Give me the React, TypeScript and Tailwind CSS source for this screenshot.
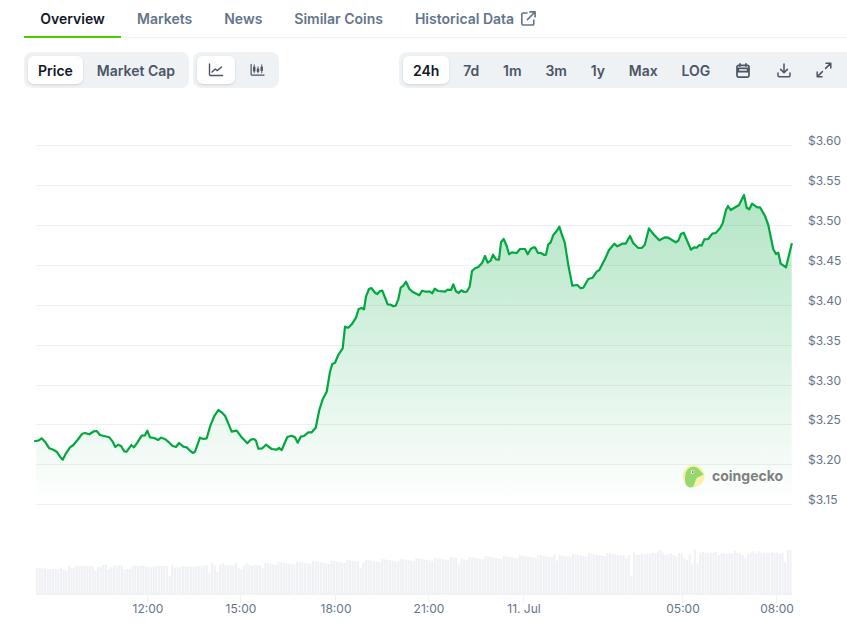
const tabs = ['Overview', 'Markets', 'News', 'Similar Coins']
const ranges = ['7d', '1m', '3m', '1y', 'Max', 'LOG']

// traced from the reference, in three overlapping crops: [x, y] pairs in crop pixels (3x)
const leftCrop = [15,153,25,152,35,145,45,155,58,175,70,179,80,185,90,200,98,209,108,190,120,172,130,165,145,147,157,131,165,129,178,133,192,124,200,123,210,135,222,138,238,142,248,155,256,171,265,164,273,168,283,184,290,185,304,165,312,172,322,158,335,137,345,136,352,122,360,142,372,144,385,150,393,143,405,147,418,158,428,168,438,171,447,159,460,170,470,172,480,182,488,189,495,185,510,143,520,147,530,145,540,110,552,80,565,60,575,67,585,77,595,100,605,125,620,122,635,142,652,160,662,149,672,147,678,152,685,176,697,175,708,164,725,177,740,179,747,174,755,180,772,141,785,137,795,142,803,158,812,140,822,138,835,127,845,127,857,113,868,60,880,20,890,2]
const midCrop = [68,538,80,515,90,455,97,432,105,428,115,405,128,385,135,320,145,323,155,313,168,293,176,267,185,264,192,268,198,230,207,207,214,204,225,218,232,222,240,213,247,212,258,240,263,253,272,254,280,259,287,257,295,238,302,203,310,197,318,185,328,207,340,217,358,226,366,212,378,215,390,215,397,220,404,206,415,213,435,215,443,209,453,210,460,193,468,214,476,219,484,211,492,216,500,215,509,200,516,153,525,145,535,141,547,128,555,108,563,128,572,122,579,104,588,118,597,119,603,67,611,57,620,78,627,103,635,97,650,99,660,87,675,87,683,103,692,87,700,82,706,83,714,99,722,99,733,105,738,104,745,73,752,67,760,45,770,33,778,20]
const rightCrop = [58,125,66,150,74,172,85,240,97,302,112,300,122,310,130,308,145,282,158,278,170,260,178,255,195,222,207,195,223,176,232,184,247,176,257,176,270,153,280,175,295,189,305,189,314,180,327,130,340,147,358,166,375,157,385,158,407,172,415,167,423,147,431,143,453,194,462,187,470,188,478,180,485,182,493,163,505,162,517,146,527,144,540,130,548,115,558,75,564,63,572,75,597,60,612,30,620,68,628,73,636,56,652,67,660,67,675,93,685,120,693,160,700,193,708,207,715,203,722,236,738,247,755,177]

function fromCrop(pts: number[], ox: number, oy: number) {
  const out: string[] = []
  for (let i = 0; i < pts.length; i += 2) {
    out.push(`${(ox + pts[i] / 3).toFixed(1)},${(oy + pts[i + 1] / 3).toFixed(1)}`)
  }
  return out
}

const line = [
  '36,441',
  ...fromCrop(leftCrop, 30, 390).filter((p) => parseFloat(p) < 322),
  ...fromCrop(midCrop, 300, 220),
  ...fromCrop(rightCrop, 540, 185),
]
const linePoints = line.join(' ')
const areaPoints = `${linePoints} 791.7,505 36,505`

const gridY = [145.5, 185.5, 225.5, 265.5, 305.5, 345.5, 385.5, 424.5, 464.5, 504.5]
const prices = ['$3.60', '$3.55', '$3.50', '$3.45', '$3.40', '$3.35', '$3.30', '$3.25', '$3.20', '$3.15']
const timeLabels = [
  { x: 148, label: '12:00' },
  { x: 241, label: '15:00' },
  { x: 336, label: '18:00' },
  { x: 429, label: '21:00' },
  { x: 524, label: '11. Jul' },
  { x: 683, label: '05:00' },
  { x: 777, label: '08:00' },
]

// bar tops read off the first and last stretch of the volume strip
const barsStart = [115,113,115,113,117,117,117,117,117,112,118,122,108,114,113,108,110,108,108,108,108,110,122,111,111,105,105,117,112,106,108,105,108,118,116,118,108,105,108,108,106,108,110,112,110,108,107,108,108,108,138,105,113,112,112,108,110,108,110,110,108,108,108,106,106,128,98,106,125,105,100,105,106,106,106,99,115,118,107,100,104,108]
const barsEnd = [76,85,75,138,67,75,75,72,75,72,72,68,70,65,60,68,75,72,70,75,80,70,72,85,90,72,100,60,100,68,66,68,68,68,68,66,75,70,70,72,70,70,62,68,70,75,85,72,68,64,70,64,68,68,68,68,66,68,68,72,68,96,60,60]

function volumeBars() {
  const total = 285
  const midStart = barsStart.length
  const midEnd = total - barsEnd.length
  const bars: { x: number; top: number }[] = []
  for (let i = 0; i < total; i++) {
    const x = 36 + i * 2.653
    let top: number
    if (i < midStart) {
      top = 530 + barsStart[i] / 3
    } else if (i >= midEnd) {
      top = 530 + barsEnd[i - midEnd] / 3
    } else {
      const wobble = ((i * 7919) % 13) * 0.28 - 1.7
      const dip = i % 37 === 11 ? 6 : 0
      top = 564 - ((i - midStart) / (midEnd - midStart)) * 10 + wobble + dip
    }
    bars.push({ x, top })
  }
  return bars
}

function LineIcon() {
  return (
    <svg width="16" height="14" viewBox="0 0 16 14" fill="none" stroke="currentColor" strokeWidth="1.4" strokeLinecap="round" strokeLinejoin="round">
      <path d="M1.5 1v10.500a1 1 0 0 0 1 1h12" />
      <path d="M4 9l3.200-3 2 1.600L13.500 4" />
    </svg>
  )
}

function CandleIcon() {
  return (
    <svg width="15" height="14" viewBox="0 0 16 14" fill="none" stroke="currentColor" strokeWidth="1" strokeLinecap="round">
      <path d="M1.200 1v10.400a1 1 0 0 0 1 1H15" strokeWidth="1.300" />
      <path d="M4.500 1.500v8.500M8.500 3.500v6.500M12.500 1.500v8.500" />
      <rect x="3.200" y="3.500" width="2.600" height="5" fill="currentColor" stroke="none" />
      <rect x="7.200" y="5.500" width="2.600" height="3.500" fill="currentColor" stroke="none" />
      <rect x="11.200" y="3.500" width="2.600" height="4.500" fill="currentColor" stroke="none" />
    </svg>
  )
}

function CalendarIcon() {
  return (
    <svg width="14" height="15" viewBox="0 0 14 15" fill="none" stroke="currentColor" strokeWidth="1.700" strokeLinecap="round">
      <rect x="1" y="2.400" width="12" height="11.700" rx="1.600" />
      <path d="M4 .9v2M10 .9v2" />
      <rect x="1" y="4.500" width="12" height="5" fill="currentColor" stroke="none" />
      <rect x="3.200" y="6.200" width="7.600" height="1.500" fill="#eff2f5" stroke="none" />
    </svg>
  )
}

function DownloadIcon() {
  return (
    <svg width="14" height="15" viewBox="0 0 14 15" fill="none" stroke="currentColor" strokeWidth="1.500" strokeLinecap="round" strokeLinejoin="round">
      <path d="M7 1v8.600M3.600 6.400 7 9.800l3.400-3.400" />
      <path d="M1 10v2.400a1.400 1.400 0 0 0 1.400 1.400h9.200a1.400 1.400 0 0 0 1.400-1.400V10" />
    </svg>
  )
}

function ExpandIcon() {
  return (
    <svg width="16" height="16" viewBox="0 0 16 16" fill="none" stroke="currentColor" strokeWidth="1.500" strokeLinecap="round" strokeLinejoin="round">
      <path d="M10 1.200h4.800V6M14.400 1.600 9.600 6.400" />
      <path d="M1.200 10v4.800H6M1.600 14.400l4.800-4.800" />
    </svg>
  )
}

function ExternalIcon() {
  return (
    <svg width="15" height="15" viewBox="0 0 15 15" fill="none" stroke="currentColor" strokeWidth="1.600" strokeLinecap="round" strokeLinejoin="round">
      <path d="M6 2H2a1.200 1.200 0 0 0-1.200 1.200v9.600A1.200 1.200 0 0 0 2 14h9.600a1.200 1.200 0 0 0 1.200-1.200V9" />
      <path d="M9 .9h5.100V6M13.800 1.200 6.400 8.600" />
    </svg>
  )
}

function GeckoLogo() {
  return (
    <g opacity="0.8">
      <circle cx="693.500" cy="476" r="11" fill="#f9ee9a" />
      <path d="M686 485C684 478 685 470 690 467.500C694 465.500 698 467.500 699.500 470C701 472 703 473 703.500 474.500C701 476.500 698 476.500 696.500 478.500C695 481 695 484 693 487C690 488 688 487 686 485Z" fill="#7ed04a" />
      <circle cx="692.500" cy="472" r="1.800" fill="#fff" />
      <circle cx="692.700" cy="472" r="0.900" fill="#4a5a3a" />
    </g>
  )
}

function PriceChart() {
  return (
    <svg viewBox="0 88 847 542" className="block h-[542px] w-[847px] shrink-0 font-normal">
      <defs>
        <linearGradient id="priceFill" x1="0" y1="195" x2="0" y2="505" gradientUnits="userSpaceOnUse">
          <stop offset="0" stopColor="#00a83e" stopOpacity="0.3" />
          <stop offset="1" stopColor="#00a83e" stopOpacity="0" />
        </linearGradient>
      </defs>

      {gridY.map((y) => (
        <line key={y} x1="36" x2="793" y1={y} y2={y} stroke="#eff0f3" strokeWidth="1" />
      ))}

      <polygon points={areaPoints} fill="url(#priceFill)" />
      <polyline points={linePoints} fill="none" stroke="#00a83e" strokeWidth="2.200" strokeLinejoin="round" strokeLinecap="round" />

      {prices.map((p, i) => (
        <text key={p} x="808" y={gridY[i] - 0.5} fill="#677489" fontSize="12" fontFamily="Inter, sans-serif">
          {p}
        </text>
      ))}

      <GeckoLogo />
      <text x="712" y="480.500" fill="#808080" fontSize="14" fontWeight="700" fontFamily="Inter, sans-serif">
        coingecko
      </text>

      {volumeBars().map((b) => (
        <rect key={b.x} x={b.x} y={b.top} width="2.100" height={594.5 - b.top} fill="#eff1f4" />
      ))}
      <line x1="36" x2="793" y1="594.5" y2="594.5" stroke="#eff1f4" />

      {timeLabels.map((t) => (
        <g key={t.label}>
          <line x1={t.x - 0.5} x2={t.x - 0.5} y1="595" y2="603" stroke="#eff1f4" />
          <text x={t.x} y="613" textAnchor="middle" fill="#677489" fontSize="12" fontFamily="Inter, sans-serif">
            {t.label}
          </text>
        </g>
      ))}
    </svg>
  )
}

export default function App() {
  return (
    <div className="flex h-[630px] w-[847px] flex-col overflow-hidden bg-white font-[Inter,sans-serif] text-sm font-semibold">
      <div className="ml-6 flex h-[38px] border-b border-[#eff2f5]">
        {tabs.map((t, i) => (
          <div
            key={t}
            className={
              i === 0
                ? 'relative flex w-[97px] items-center justify-center text-[#111827] after:absolute after:inset-x-0 after:-bottom-px after:h-0.5 after:bg-[#4bcc00]'
                : 'flex items-center px-4 text-[#64748b]'
            }
          >
            {t}
          </div>
        ))}
        <div className="flex items-center gap-[7px] px-4 text-[#64748b]">
          Historical Data
          <ExternalIcon />
        </div>
      </div>

      <div className="mt-3.5 flex h-9 items-stretch pl-6">
        <div className="flex gap-1 rounded-lg bg-[#eff2f5] p-1">
          <div className="flex items-center rounded-md bg-white px-2.5 pt-px text-[#111827] shadow-sm">Price</div>
          <div className="flex items-center px-2.5 pt-px text-[#4b5565]">Market Cap</div>
        </div>
        <div className="ml-1 flex gap-1 rounded-lg bg-[#eff2f5] p-1 text-[#4b5565]">
          <div className="flex w-[38px] items-center justify-center rounded-md bg-white shadow-sm">
            <LineIcon />
          </div>
          <div className="flex w-[36px] items-center justify-center">
            <CandleIcon />
          </div>
        </div>
        <div className="ml-auto flex w-[448px] shrink-0 gap-[3.8px] rounded-l-lg bg-[#eff2f5] p-1 text-[#4b5565]">
          <div className="flex items-center rounded-md bg-white px-2.5 pt-px text-[#111827] shadow-sm">24h</div>
          {ranges.map((r) => (
            <div key={r} className="flex items-center px-2.5 pt-px">
              {r}
            </div>
          ))}
          <div className="flex w-[37.2px] items-center justify-center">
            <CalendarIcon />
          </div>
          <div className="flex w-[37.2px] items-center justify-center">
            <DownloadIcon />
          </div>
          <div className="flex w-[37.2px] items-center justify-center">
            <ExpandIcon />
          </div>
        </div>
      </div>

      <PriceChart />
    </div>
  )
}
